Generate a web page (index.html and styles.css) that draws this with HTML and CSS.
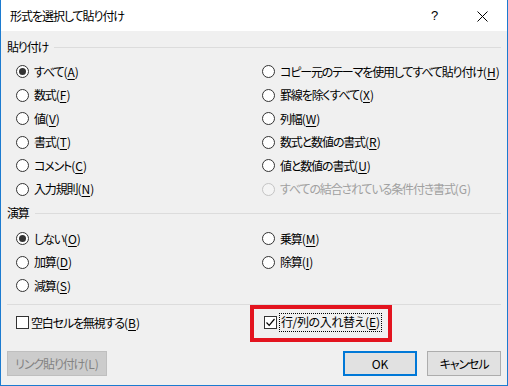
FILE: index.html
```html
<!DOCTYPE html>
<html lang="ja">
<head>
<meta charset="utf-8">
<link rel="stylesheet" href="styles.css">
</head>
<body>
<div class="window">
  <div class="titlebar">
    <span class="title">形式を選択して貼り付け</span>
    <span class="help">?</span>
    <span class="close"><svg width="11" height="11" viewBox="0 0 11 11"><path d="M0.5 0.5 L10.5 10.5 M10.5 0.5 L0.5 10.5" stroke="#000" stroke-width="1"/></svg></span>
  </div>
  <div class="content">
    <div class="group-head"><span>貼り付け</span><i class="rule"></i></div>
    <div class="grid paste">
      <label class="opt"><span class="radio on"></span>すべて<span class="key">(<u>A</u>)</span></label>
      <label class="opt"><span class="radio"></span>コピー元のテーマを使用してすべて貼り付け<span class="key">(<u>H</u>)</span></label>
      <label class="opt"><span class="radio"></span>数式<span class="key">(<u>F</u>)</span></label>
      <label class="opt"><span class="radio"></span>罫線を除くすべて<span class="key">(<u>X</u>)</span></label>
      <label class="opt"><span class="radio"></span>値<span class="key">(<u>V</u>)</span></label>
      <label class="opt"><span class="radio"></span>列幅<span class="key">(<u>W</u>)</span></label>
      <label class="opt"><span class="radio"></span>書式<span class="key">(<u>T</u>)</span></label>
      <label class="opt"><span class="radio"></span>数式と数値の書式<span class="key">(<u>R</u>)</span></label>
      <label class="opt"><span class="radio"></span>コメント<span class="key">(<u>C</u>)</span></label>
      <label class="opt"><span class="radio"></span>値と数値の書式<span class="key">(<u>U</u>)</span></label>
      <label class="opt"><span class="radio"></span>入力規則<span class="key">(<u>N</u>)</span></label>
      <label class="opt disabled"><span class="radio"></span>すべての結合されている条件付き書式<span class="key">(G)</span></label>
    </div>
    <div class="group-head second"><span>演算</span><i class="rule"></i></div>
    <div class="grid ops">
      <label class="opt"><span class="radio on"></span>しない<span class="key">(<u>O</u>)</span></label>
      <label class="opt"><span class="radio"></span>乗算<span class="key">(<u>M</u>)</span></label>
      <label class="opt"><span class="radio"></span>加算<span class="key">(<u>D</u>)</span></label>
      <label class="opt"><span class="radio"></span>除算<span class="key">(<u>I</u>)</span></label>
      <label class="opt"><span class="radio"></span>減算<span class="key">(<u>S</u>)</span></label>
      <span></span>
    </div>
    <div class="sep"></div>
    <div class="checks">
      <label class="opt"><span class="check"></span>空白セルを無視する<span class="key">(<u>B</u>)</span></label>
      <label class="opt right"><span class="check"><svg width="11" height="11" viewBox="0 0 11 11"><path d="M1.5 5.5 L4.2 8.3 L9.5 2" fill="none" stroke="#000" stroke-width="1.2"/></svg></span><span class="focus">行/列の入れ替え<span class="key">(<u>E</u>)</span></span></label>
    </div>
    <div class="buttons">
      <button class="btn link" disabled>リンク貼り付け<span class="key">(L)</span></button>
      <span class="spacer"></span>
      <button class="btn ok">OK</button>
      <button class="btn">キャンセル</button>
    </div>
  </div>
  <div class="highlight"></div>
</div>
</body>
</html>
```
FILE: styles.css
```css
* { box-sizing: border-box; }
html, body { margin: 0; padding: 0; }
body {
  width: 508px;
  height: 386px;
  overflow: hidden;
  font-family: "Noto Sans CJK JP", "Noto Sans", sans-serif;
  font-size: 12px;
  font-feature-settings: "palt";
  letter-spacing: -1.15px;
  color: #000;
}
.key { letter-spacing: 0; }
.window {
  position: relative;
  width: 508px;
  height: 386px;
  background: #f0f0f0;
  border: 1px solid #1c7bd0;
  border-top: none;
  display: flex;
  flex-direction: column;
}
.titlebar {
  height: 31px;
  background: #fff;
  display: flex;
  align-items: center;
  padding-left: 9px;
}
.title { flex: 1; line-height: 1; letter-spacing: -1.05px; }
.help { width: 46px; font-size: 13px; font-family: "Liberation Sans", sans-serif; letter-spacing: 0; }
.close { width: 30px; display: flex; align-items: center; padding-top: 1px; }
.content {
  flex: 1;
  display: flex;
  flex-direction: column;
  padding: 0 6px;
}
.group-head {
  margin-top: 8px;
  height: 16px;
  display: flex;
  align-items: center;
  gap: 6px;
  line-height: 1;
}
.group-head.second { margin-top: 4px; }
.rule { flex: 1; height: 1px; background: #dcdcdc; }
.grid {
  display: grid;
  grid-template-columns: 246px 1fr;
  grid-auto-rows: 23.5px;
  padding-left: 9px;
}
.paste { margin-top: 5px; }
.ops { margin-top: 6px; }
.opt {
  display: flex;
  align-items: center;
  white-space: nowrap;
  line-height: 1;
}
.opt u { text-decoration: underline; text-underline-offset: 2px; }
.radio {
  width: 13px;
  height: 13px;
  border: 1px solid #333;
  border-radius: 50%;
  background: #fff;
  margin-right: 5px;
  display: flex;
  align-items: center;
  justify-content: center;
  flex: none;
}
.radio.on::after {
  content: "";
  width: 7px;
  height: 7px;
  border-radius: 50%;
  background: #333;
}
.disabled { color: #a0a0a0; }
.disabled .radio { border-color: #c4c4c4; background: #f4f4f4; }
.sep { margin-top: 6px; height: 1px; background: #dcdcdc; }
.checks {
  display: flex;
  height: 24px;
  margin-top: 6px;
  padding-left: 9px;
}
.checks .opt:first-child { width: 248px; }
.check {
  width: 13px;
  height: 13px;
  border: 1px solid #333;
  background: #fff;
  margin-right: 2px;
  flex: none;
  display: flex;
  align-items: center;
  justify-content: center;
}
.focus {
  border: 1px dotted #000;
  padding: 2px 1px 3px 1px;
  letter-spacing: -0.4px;
}
.buttons {
  margin-top: 16px;
  display: flex;
  gap: 10px;
}
.spacer { flex: 1; }
.btn {
  height: 25px;
  width: 74px;
  font: inherit;
  font-feature-settings: "palt";
  letter-spacing: -1.15px;
  background: #e1e1e1;
  border: 1px solid #adadad;
  padding: 0;
  color: #000;
}
.btn.ok { border: 2px solid #0078d7; letter-spacing: 0; }
.btn.link {
  width: 100px;
  background: #cccccc;
  border-color: #bfbfbf;
  color: #838383;
}
.highlight {
  position: absolute;
  left: 249px;
  top: 305px;
  width: 142px;
  height: 37px;
  border: 4px solid #e3141f;
}
```
